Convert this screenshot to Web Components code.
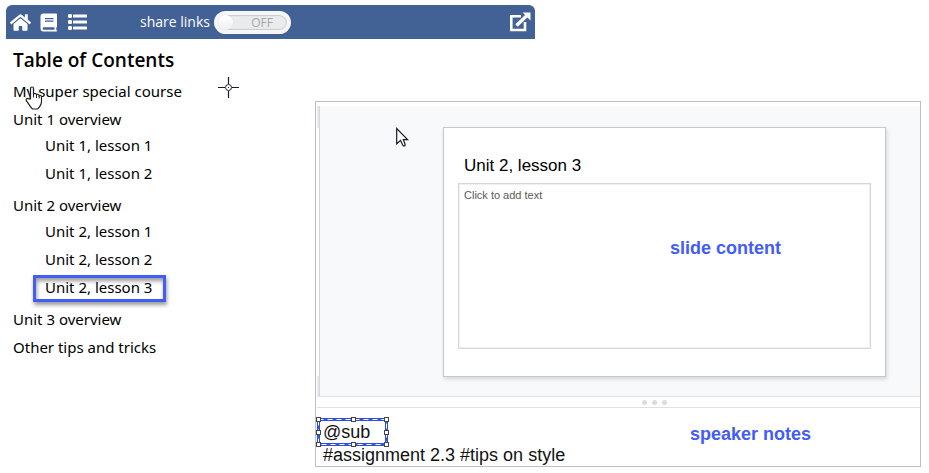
<!DOCTYPE html>
<html lang="en">
<head>
<meta charset="utf-8">
<title>Table of Contents</title>
<style>
  html { background: #fff; }
  body { margin: 0; color: #000; font-family: "Noto Sans", "Open Sans", sans-serif; }
</style>
</head>
<body>
<course-page></course-page>

<template id="t-page">
  <style>
    :host {
      display: grid; position: relative; box-sizing: border-box;
      grid-template-columns: 309fr 220fr 386fr;
      grid-template-rows: auto 1fr;
      padding: 5px 8px 6px 6px;
    }
    tool-bar { grid-column: 1 / 3; }
    toc-list { grid-column: 1; }
    slide-editor { grid-column: 2 / 4; margin-top: 62px; }
    pointer-mark { position: absolute; }
    .hand { left: 25px; top: 86px; }
    .cross { left: 218px; top: 77px; }
    .arrow { left: 396px; top: 127px; }
  </style>
  <tool-bar></tool-bar>
  <toc-list></toc-list>
  <slide-editor></slide-editor>
  <pointer-mark class="hand" kind="hand"></pointer-mark>
  <pointer-mark class="cross" kind="cross"></pointer-mark>
  <pointer-mark class="arrow" kind="arrow"></pointer-mark>
</template>

<template id="t-bar">
  <style>
    :host {
      display: flex; align-items: center; box-sizing: border-box; height: 34px;
      padding: 0 4px; background: #426195; color: #fff; border-radius: 6px 6px 0 0;
    }
    .icons { display: flex; gap: 9px; }
    share-toggle { margin-left: 53px; }
    .open { margin-left: auto; }
  </style>
  <div class="icons">
    <icon-button name="home" label="Home"></icon-button>
    <icon-button name="book" label="Book"></icon-button>
    <icon-button name="list" label="Contents"></icon-button>
  </div>
  <share-toggle></share-toggle>
  <icon-button class="open" name="open" label="Open in new window"></icon-button>
</template>

<template id="t-icon">
  <style>
    :host { display: block; }
    button { display: flex; padding: 0; border: 0; background: none; color: inherit; }
    svg { display: block; }
  </style>
  <button type="button"></button>
</template>

<template id="t-toggle">
  <style>
    :host { display: block; }
    label { display: flex; align-items: center; gap: 4px; font-size: 14px; line-height: 20px; font-family: "Open Sans", "Noto Sans", sans-serif; }
    .switch {
      display: flex; align-items: center; position: relative; box-sizing: border-box;
      width: 77px; height: 23px; padding: 0 14px 0 17px; justify-content: flex-end;
      border: 4px solid #f6f6f6; border-radius: 12px; background: #e9ebec;
      box-shadow: inset 0 0 1px 1px #c9cbcd; color: #a5a7a9; font-size: 12px; line-height: 15px;
    }
    input {
      appearance: none; position: absolute; left: 0; top: 0; margin: 0;
      width: 15px; height: 15px; border-radius: 50%;
      background: linear-gradient(#fff, #f0f0f0); box-shadow: 0 0 1px #ccc;
    }
  </style>
  <label for="share">share links
    <span class="switch"><input id="share" type="checkbox"><span>OFF</span></span>
  </label>
</template>

<template id="t-toc">
  <style>
    :host { display: block; padding: 8px 0 0 7px; }
    h1 { margin: 0 0 6px; font: 600 19px/26px "Open Sans", "Noto Sans", sans-serif; }
    ul { list-style: none; margin: 0; padding: 0; display: flex; flex-direction: column; gap: 4px; }
    ul ul { margin: 2px 0 0; padding: 0 0 4px 32px; }
  </style>
  <h1>Table of Contents</h1>
  <nav aria-label="Table of Contents">
    <ul>
      <li><toc-link>My super special course</toc-link></li>
      <li><toc-link>Unit 1 overview</toc-link>
        <ul>
          <li><toc-link>Unit 1, lesson 1</toc-link></li>
          <li><toc-link>Unit 1, lesson 2</toc-link></li>
        </ul>
      </li>
      <li><toc-link>Unit 2 overview</toc-link>
        <ul>
          <li><toc-link>Unit 2, lesson 1</toc-link></li>
          <li><toc-link>Unit 2, lesson 2</toc-link></li>
          <li><toc-link current>Unit 2, lesson 3</toc-link></li>
        </ul>
      </li>
      <li><toc-link>Unit 3 overview</toc-link></li>
      <li><toc-link>Other tips and tricks</toc-link></li>
    </ul>
  </nav>
</template>

<template id="t-link">
  <style>
    :host { display: flex; font-size: 15px; line-height: 24px; }
    a { color: #000; text-decoration: none; position: relative; white-space: nowrap; }
    :host([current]) a::after {
      content: ""; position: absolute; inset: 0 -14px -3px -12px;
      border: 3px solid #425cf8;
      box-shadow: 1px 3px 4px rgba(0,0,0,.4), inset 1px 3px 4px rgba(0,0,0,.4);
    }
  </style>
  <a href="#"><slot></slot></a>
</template>

<template id="t-editor">
  <style>
    :host {
      display: flex; flex-direction: column; border: 1px solid #bfbfbf; padding: 4px 0 0 1px;
      font-family: "Liberation Sans", Arial, sans-serif;
    }
    .stage { display: grid; grid-template-columns: 3px 1fr; height: 290px; }
    .rail { display: flex; flex-direction: column; justify-content: space-between; border-right: 1px solid #d5d6da; }
    .rail i { height: 22px; background: #e8eaf1; }
    .rail i:last-child { height: 20px; }
    .canvas { display: flex; padding: 21px 34px 19px 123px; background: #f8f9fb; }
    slide-card { flex: 1; }
    .split {
      display: flex; align-items: center; justify-content: center; gap: 5px; height: 10px;
      border: solid #e0e0e0; border-width: 1px 0; padding-left: 72px; background: #fff;
    }
    .split i { width: 5px; height: 5px; border-radius: 50%; background: #dadce0; }
  </style>
  <div class="stage">
    <div class="rail"><i></i><i></i></div>
    <div class="canvas"><slide-card></slide-card></div>
  </div>
  <div class="split"><i></i><i></i><i></i></div>
  <speaker-notes></speaker-notes>
</template>

<template id="t-slide">
  <style>
    :host {
      display: flex; flex-direction: column; box-sizing: border-box; padding: 27px 14px 27px;
      background: #fff; border: 1px solid #c8c8c8; box-shadow: 1px 2px 4px rgba(0,0,0,.15);
    }
    h2 { margin: 0 0 6px; padding-left: 6px; font-size: 17px; line-height: 22px; font-weight: 400; }
    .body { position: relative; display: flex; flex: 1; }
    textarea {
      flex: 1; min-width: 0; box-sizing: border-box; resize: none; outline: 0; margin: 0;
      padding: 4px 5px; border: 1px solid #d6d6d6; background: #fff; color: #595959;
      box-shadow: inset 0 0 0 1px #f0f0f0;
      font: 11px/14px "Liberation Sans", Arial, sans-serif;
    }
    textarea::placeholder { color: #595959; opacity: 1; }
    strong { position: absolute; left: 212px; top: 54px; color: #425cf8; font-size: 18px; line-height: 22px; }
  </style>
  <h2>Unit 2, lesson 3</h2>
  <div class="body">
    <textarea aria-label="Slide text" placeholder="Click to add text"></textarea>
    <strong>slide content</strong>
  </div>
</template>

<template id="t-notes">
  <style>
    :host { display: block; position: relative; height: 58px; }
    textarea {
      display: block; width: 100%; height: 100%; box-sizing: border-box; margin: 0; resize: none;
      padding: 13px 0 0 6px; border: 0; outline: 0; overflow: hidden; background: none; color: #111;
      font: 18px/23px "Liberation Sans", Arial, sans-serif;
    }
    strong { position: absolute; left: 373px; top: 15px; color: #425cf8; font-size: 18px; line-height: 22px; }
    svg { position: absolute; left: -2px; top: 7px; }
  </style>
  <textarea aria-label="Speaker notes">@sub
#assignment 2.3 #tips on style</textarea>
  <strong>speaker notes</strong>
  <svg width="74" height="32" aria-hidden="true">
    <rect x="3.500" y="4.500" width="68" height="25" fill="none" stroke="#3a48d8" stroke-width="3"/>
    <rect x="3.500" y="4.500" width="68" height="25" fill="none" stroke="#0b6fdc" stroke-width="1"/>
    <rect x="3.500" y="4.500" width="68" height="25" fill="none" stroke="#fff" stroke-width="1" stroke-dasharray="5 4"/>
    <g fill="#fff" stroke="#444">
      <rect x="1.500" y="2.500" width="4" height="4"/><rect x="36.500" y="2.500" width="4" height="4"/><rect x="69.500" y="2.500" width="4" height="4"/>
      <rect x="1.500" y="15.500" width="4" height="4"/><rect x="69.500" y="15.500" width="4" height="4"/>
      <rect x="1.500" y="27.500" width="4" height="4"/><rect x="36.500" y="27.500" width="4" height="4"/><rect x="69.500" y="27.500" width="4" height="4"/>
    </g>
  </svg>
</template>

<script>
  const ICONS = {
    home: '<svg width="21" height="19" viewBox="0 0 576 512" fill="currentColor"><path d="M280.400 148.300 96 300.100V464a16 16 0 0 0 16 16l112-.3a16 16 0 0 0 16-16V368a16 16 0 0 1 16-16h64a16 16 0 0 1 16 16v95.700a16 16 0 0 0 16 16l112 .3a16 16 0 0 0 16-16V300L295.700 148.300a12.200 12.200 0 0 0-15.300 0zM571.600 251.500 488 182.600V44a12 12 0 0 0-12-12h-56a12 12 0 0 0-12 12v72.600L318.500 43a48 48 0 0 0-61 0L4.300 251.500a12 12 0 0 0-1.600 16.900l25.500 31a12 12 0 0 0 16.900 1.600L280.400 107.200a12.200 12.200 0 0 1 15.300 0L530.900 301a12 12 0 0 0 16.900-1.600l25.500-31a12 12 0 0 0-1.700-16.900z"/></svg>',
    book: '<svg width="17" height="19" viewBox="0 0 17 19" fill="currentColor"><path fill-rule="evenodd" d="M3.500.5H16Q17 .5 17 1.500V13.500Q17 14.200 16.300 14.500V17Q17 17.300 17 18Q17 18.500 16.300 18.500H3.500Q.5 18.500 .5 15.500V3.500Q.5.500 3.500.5zM5 5v1.200h8.500V5zM5 7.500v1.200h8.500V7.500zM3.800 14.300Q2.700 14.300 2.700 15.500T3.800 16.700H14.500V14.300z"/></svg>',
    list: '<svg width="21" height="18" viewBox="0 0 21 18" fill="currentColor"><rect x="2" y="1" width="4" height="4" rx="1.300"/><rect x="2" y="7" width="4" height="4" rx="1.300"/><rect x="2" y="13" width="4" height="4" rx="1.300"/><rect x="7" y="1.500" width="14" height="3" rx=".6"/><rect x="7" y="7.500" width="14" height="3" rx=".6"/><rect x="7" y="13.500" width="14" height="3" rx=".6"/></svg>',
    open: '<svg width="22" height="20" viewBox="0 0 22 20" fill="none" stroke="currentColor" stroke-width="2.600"><path d="M12 4.300H2.300V18H16V10"/><path d="M7.500 13.500 18 3.500" stroke-width="3.400"/><path d="M13.500.5H21.500V8.500L18.700 5.800 16.300 3.300z" fill="currentColor" stroke="none"/></svg>'
  };
  const POINTERS = {
    hand: '<svg width="18" height="24" viewBox="0 0 18 24"><path d="M5.500 13V2.500a1.500 1.500 0 0 1 3 0V8.500C8.500 7 11.500 7 11.500 9 12 7.800 14 8 14.200 9.800 15 9 16.500 9.500 16.500 11v4.500c0 3-1.500 4-2 5.500l-2 2H7.500c-2-1.500-3.500-5-6-8-1.200-2 .8-3.300 2.200-2z" fill="#fff" stroke="#222" stroke-width="1.200"/><path d="M8.500 8v3.500M11.500 9v3M14.200 9.800v2.700" stroke="#222"/></svg>',
    cross: '<svg width="21" height="21" viewBox="0 0 21 21" fill="none" stroke="#1a1a2a"><path d="M10.500 0v7M10.500 14v7M0 10.500h7M14 10.500h7" stroke-width="1.200"/><circle cx="10.500" cy="10.500" r="3"/><path d="M10 10.500h1"/></svg>',
    arrow: '<svg width="14" height="21" viewBox="0 0 14 21"><path d="M.7 1.500V16.800L4.500 13.400 7 18.500c1 .9 2.500.3 2.200-1L7.300 12.600H11.600z" fill="#fff" stroke="#181828" stroke-width="1.200"/></svg>'
  };

  function define(name, templateId, setup) {
    customElements.define(name, class extends HTMLElement {
      constructor() {
        super();
        this.attachShadow({ mode: "open" })
          .append(document.getElementById(templateId).content.cloneNode(true));
      }
      connectedCallback() { if (setup) setup(this); }
    });
  }

  class PointerMark extends HTMLElement {
    connectedCallback() {
      if (this.shadowRoot) return;
      this.attachShadow({ mode: "open" }).innerHTML =
        "<style>:host{display:block;pointer-events:none}svg{display:block}</style>" +
        POINTERS[this.getAttribute("kind")];
    }
  }
  customElements.define("pointer-mark", PointerMark);

  define("icon-button", "t-icon", el => {
    const button = el.shadowRoot.querySelector("button");
    button.setAttribute("aria-label", el.getAttribute("label"));
    button.innerHTML = ICONS[el.getAttribute("name")];
  });
  define("share-toggle", "t-toggle");
  define("tool-bar", "t-bar");
  define("toc-link", "t-link");
  define("toc-list", "t-toc");
  define("slide-card", "t-slide");
  define("speaker-notes", "t-notes");
  define("slide-editor", "t-editor");
  define("course-page", "t-page");
</script>
</body>
</html>
